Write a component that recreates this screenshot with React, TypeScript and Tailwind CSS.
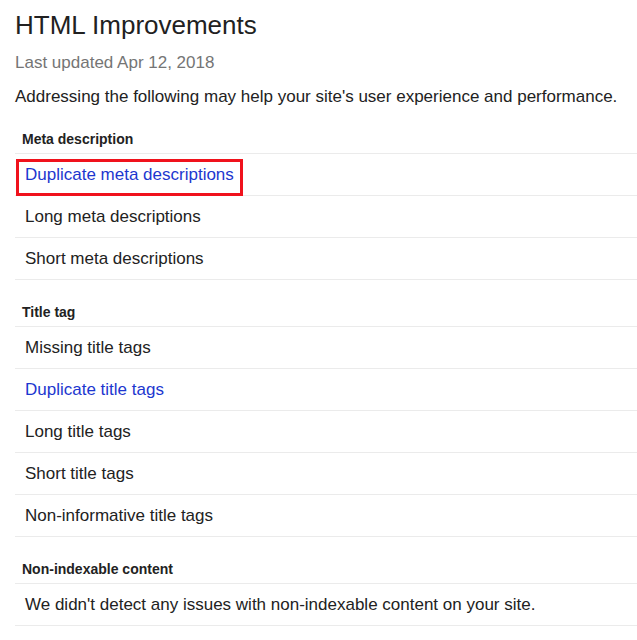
const metaRows = [
  { label: 'Duplicate meta descriptions', link: true, boxed: true },
  { label: 'Long meta descriptions' },
  { label: 'Short meta descriptions' },
];

const titleRows = [
  { label: 'Missing title tags' },
  { label: 'Duplicate title tags', link: true },
  { label: 'Long title tags' },
  { label: 'Short title tags' },
  { label: 'Non-informative title tags' },
];

type Row = { label: string; link?: boolean; boxed?: boolean };

function Section({ title, rows, className = '' }: { title: string; rows: Row[]; className?: string }) {
  return (
    <section className={className}>
      <h2 className="flex h-[30px] items-center border-b border-[#ebebeb] pl-[7px] text-[14px] font-bold text-[#222]">
        {title}
      </h2>
      {rows.map((row) => (
        <div
          key={row.label}
          className="relative flex h-[42px] items-center border-b border-[#ebebeb] pl-[10px]"
        >
          {row.boxed && (
            <span className="absolute left-[1px] top-[5px] h-[37px] w-[227px] border-[3px] border-[#f0121c]" />
          )}
          <span className={row.link ? 'text-[#1d37cf]' : 'text-[#222]'}>{row.label}</span>
        </div>
      ))}
    </section>
  );
}

export default function App() {
  return (
    <div className="min-h-[640px] bg-white pl-[15px] font-['Liberation_Sans',Arial,sans-serif] text-[17px] leading-5">
      <h1 className="pt-[9px] text-[26px] leading-8 text-[#212121]">HTML Improvements</h1>
      <p className="mt-[12px] text-[#757575]">Last updated Apr 12, 2018</p>
      <p className="mt-[14px] text-[#222]">
        Addressing the following may help your site's user experience and performance.
      </p>
      <Section className="mt-[17px]" title="Meta description" rows={metaRows} />
      <Section className="mt-[17px]" title="Title tag" rows={titleRows} />
      <Section
        className="mt-[17px]"
        title="Non-indexable content"
        rows={[{ label: "We didn't detect any issues with non-indexable content on your site." }]}
      />
    </div>
  );
}
